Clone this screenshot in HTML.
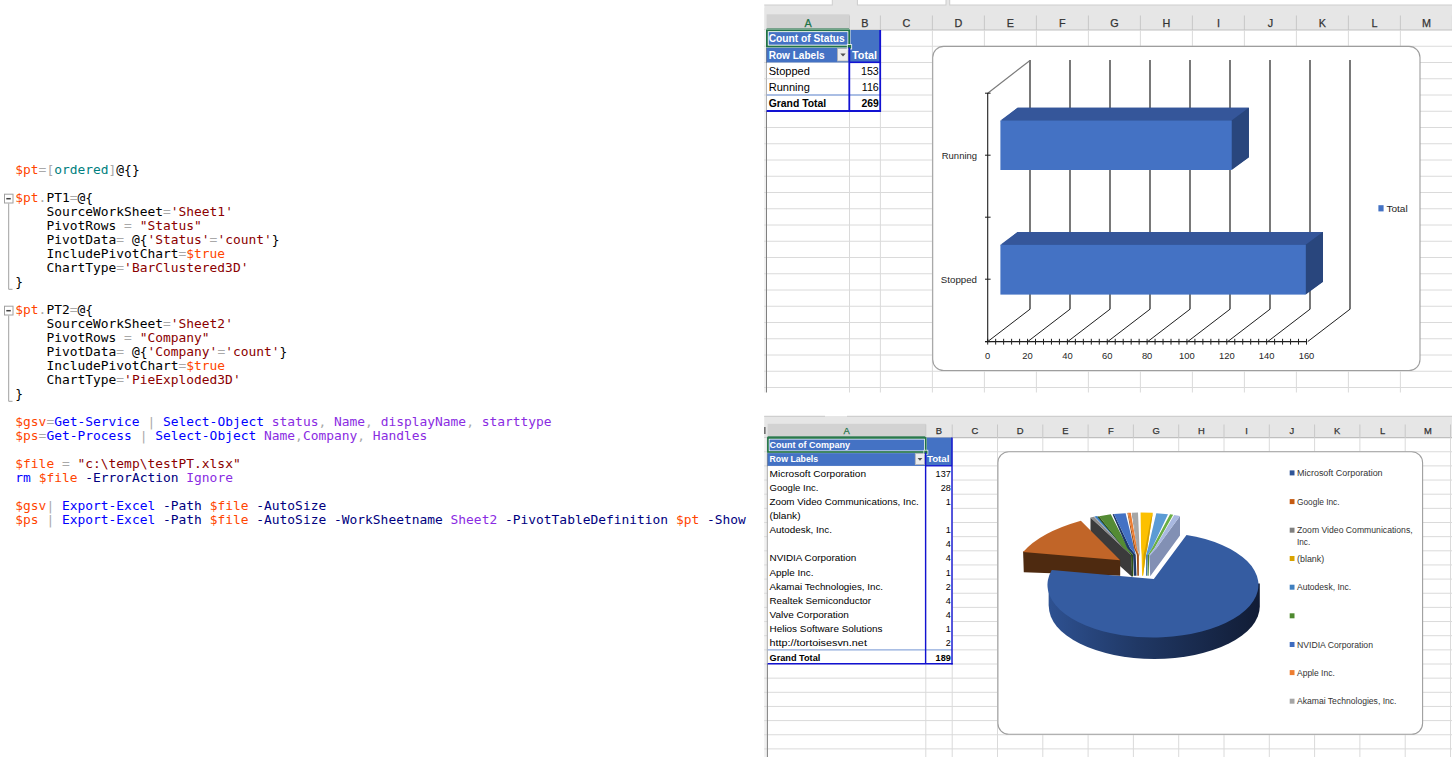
<!DOCTYPE html>
<html lang="en"><head><meta charset="utf-8"><title>PivotTable charts</title>
<style>
html,body{margin:0;padding:0;background:#fff;}
body{width:1452px;height:757px;position:relative;overflow:hidden;font-family:"Liberation Sans",sans-serif;}
pre.code{position:absolute;left:15.3px;top:162.6px;margin:0;font-family:"DejaVu Sans Mono","Liberation Mono",monospace;font-size:12.92px;line-height:14px;color:#000;white-space:pre;letter-spacing:0;}
.v{color:#ff4500}.o{color:#a9a9a9}.t{color:#008080}.s{color:#8b0000}.c{color:#0000ff}.p{color:#000080}.a{color:#8a2be2}.k{color:#000}
svg{position:absolute;left:0;top:0}
svg text{font-family:"Liberation Sans",sans-serif}
</style></head>
<body>
<pre class="code"><span class="v">$pt</span><span class="o">=[</span><span class="t">ordered</span><span class="o">]</span><span class="k">@{}</span>

<span class="v">$pt</span><span class="o">.</span><span class="k">PT1</span><span class="o">=</span><span class="k">@{</span>
    <span class="k">SourceWorkSheet</span><span class="o">=</span><span class="s">'Sheet1'</span>
    <span class="k">PivotRows</span> <span class="o">=</span> <span class="s">"Status"</span>
    <span class="k">PivotData</span><span class="o">=</span> <span class="k">@{</span><span class="s">'Status'</span><span class="o">=</span><span class="s">'count'</span><span class="k">}</span>
    <span class="k">IncludePivotChart</span><span class="o">=</span><span class="v">$true</span>
    <span class="k">ChartType</span><span class="o">=</span><span class="s">'BarClustered3D'</span>
<span class="k">}</span>

<span class="v">$pt</span><span class="o">.</span><span class="k">PT2</span><span class="o">=</span><span class="k">@{</span>
    <span class="k">SourceWorkSheet</span><span class="o">=</span><span class="s">'Sheet2'</span>
    <span class="k">PivotRows</span> <span class="o">=</span> <span class="s">"Company"</span>
    <span class="k">PivotData</span><span class="o">=</span> <span class="k">@{</span><span class="s">'Company'</span><span class="o">=</span><span class="s">'count'</span><span class="k">}</span>
    <span class="k">IncludePivotChart</span><span class="o">=</span><span class="v">$true</span>
    <span class="k">ChartType</span><span class="o">=</span><span class="s">'PieExploded3D'</span>
<span class="k">}</span>

<span class="v">$gsv</span><span class="o">=</span><span class="c">Get-Service</span> <span class="o">|</span> <span class="c">Select-Object</span> <span class="a">status</span><span class="o">,</span> <span class="a">Name</span><span class="o">,</span> <span class="a">displayName</span><span class="o">,</span> <span class="a">starttype</span>
<span class="v">$ps</span><span class="o">=</span><span class="c">Get-Process</span> <span class="o">|</span> <span class="c">Select-Object</span> <span class="a">Name</span><span class="o">,</span><span class="a">Company</span><span class="o">,</span> <span class="a">Handles</span>

<span class="v">$file</span> <span class="o">=</span> <span class="s">"c:\temp\testPT.xlsx"</span>
<span class="c">rm</span> <span class="v">$file</span> <span class="p">-ErrorAction</span> <span class="a">Ignore</span>

<span class="v">$gsv</span><span class="o">|</span> <span class="c">Export-Excel</span> <span class="p">-Path</span> <span class="v">$file</span> <span class="p">-AutoSize</span>
<span class="v">$ps</span> <span class="o">|</span> <span class="c">Export-Excel</span> <span class="p">-Path</span> <span class="v">$file</span> <span class="p">-AutoSize</span> <span class="p">-WorkSheetname</span> <span class="a">Sheet2</span> <span class="p">-PivotTableDefinition</span> <span class="v">$pt</span> <span class="p">-Show</span></pre>
<svg width="1452" height="757" viewBox="0 0 1452 757">
<defs><linearGradient id="bs" x1="0" y1="0" x2="1" y2="0"><stop offset="0" stop-color="#2e5191"/><stop offset="0.42" stop-color="#203865"/><stop offset="1" stop-color="#111c35"/></linearGradient></defs>
<rect x="4.5" y="194.2" width="8.5" height="8.8" fill="#fff" stroke="#a0a0a0" stroke-width="1"/>
<line x1="6.30" y1="198.70" x2="10.80" y2="198.70" stroke="#404040" stroke-width="1.5"/>
<line x1="8.70" y1="203.50" x2="8.70" y2="289.30" stroke="#a0a0a0" stroke-width="1"/>
<line x1="8.70" y1="289.30" x2="12.50" y2="289.30" stroke="#a0a0a0" stroke-width="1"/>
<rect x="4.5" y="306.2" width="8.5" height="8.8" fill="#fff" stroke="#a0a0a0" stroke-width="1"/>
<line x1="6.30" y1="310.70" x2="10.80" y2="310.70" stroke="#404040" stroke-width="1.5"/>
<line x1="8.70" y1="315.50" x2="8.70" y2="401.30" stroke="#a0a0a0" stroke-width="1"/>
<line x1="8.70" y1="401.30" x2="12.50" y2="401.30" stroke="#a0a0a0" stroke-width="1"/>
<rect x="764.20" y="0.00" width="687.80" height="30.00" fill="#e6e6e6"/>
<rect x="762.7" y="-2" width="69.6" height="7" fill="#fff" stroke="#cdcdcd" stroke-width="1"/>
<rect x="857.4" y="-2" width="88.6" height="7" fill="#fff" stroke="#cdcdcd" stroke-width="1"/>
<rect x="949.7" y="-2" width="504.3" height="7" fill="#fff" stroke="#cdcdcd" stroke-width="1"/>
<rect x="761.20" y="0.00" width="3.00" height="8.00" fill="#fff"/>
<rect x="766.60" y="14.30" width="82.90" height="15.70" fill="#d2d2d2"/>
<line x1="766.60" y1="29.30" x2="849.50" y2="29.30" stroke="#217346" stroke-width="1.6"/>
<line x1="849.50" y1="15.50" x2="849.50" y2="30.00" stroke="#c8c8c8" stroke-width="1"/>
<line x1="880.40" y1="15.50" x2="880.40" y2="30.00" stroke="#c8c8c8" stroke-width="1"/>
<line x1="932.40" y1="15.50" x2="932.40" y2="30.00" stroke="#c8c8c8" stroke-width="1"/>
<line x1="984.40" y1="15.50" x2="984.40" y2="30.00" stroke="#c8c8c8" stroke-width="1"/>
<line x1="1036.40" y1="15.50" x2="1036.40" y2="30.00" stroke="#c8c8c8" stroke-width="1"/>
<line x1="1088.40" y1="15.50" x2="1088.40" y2="30.00" stroke="#c8c8c8" stroke-width="1"/>
<line x1="1140.40" y1="15.50" x2="1140.40" y2="30.00" stroke="#c8c8c8" stroke-width="1"/>
<line x1="1192.40" y1="15.50" x2="1192.40" y2="30.00" stroke="#c8c8c8" stroke-width="1"/>
<line x1="1244.40" y1="15.50" x2="1244.40" y2="30.00" stroke="#c8c8c8" stroke-width="1"/>
<line x1="1296.40" y1="15.50" x2="1296.40" y2="30.00" stroke="#c8c8c8" stroke-width="1"/>
<line x1="1348.40" y1="15.50" x2="1348.40" y2="30.00" stroke="#c8c8c8" stroke-width="1"/>
<line x1="1400.40" y1="15.50" x2="1400.40" y2="30.00" stroke="#c8c8c8" stroke-width="1"/>
<line x1="1452.40" y1="15.50" x2="1452.40" y2="30.00" stroke="#c8c8c8" stroke-width="1"/>
<line x1="764.20" y1="30.00" x2="1452.00" y2="30.00" stroke="#bfbfbf" stroke-width="1.2"/>
<text x="808.05" y="26.50" font-size="10.8" fill="#217346" text-anchor="middle" font-weight="normal" stroke="#217346" stroke-width="0.25">A</text>
<text x="864.95" y="26.50" font-size="10.8" fill="#333" text-anchor="middle" font-weight="normal" stroke="#333" stroke-width="0.25">B</text>
<text x="906.40" y="26.50" font-size="10.8" fill="#333" text-anchor="middle" font-weight="normal" stroke="#333" stroke-width="0.25">C</text>
<text x="958.40" y="26.50" font-size="10.8" fill="#333" text-anchor="middle" font-weight="normal" stroke="#333" stroke-width="0.25">D</text>
<text x="1010.40" y="26.50" font-size="10.8" fill="#333" text-anchor="middle" font-weight="normal" stroke="#333" stroke-width="0.25">E</text>
<text x="1062.40" y="26.50" font-size="10.8" fill="#333" text-anchor="middle" font-weight="normal" stroke="#333" stroke-width="0.25">F</text>
<text x="1114.40" y="26.50" font-size="10.8" fill="#333" text-anchor="middle" font-weight="normal" stroke="#333" stroke-width="0.25">G</text>
<text x="1166.40" y="26.50" font-size="10.8" fill="#333" text-anchor="middle" font-weight="normal" stroke="#333" stroke-width="0.25">H</text>
<text x="1218.40" y="26.50" font-size="10.8" fill="#333" text-anchor="middle" font-weight="normal" stroke="#333" stroke-width="0.25">I</text>
<text x="1270.40" y="26.50" font-size="10.8" fill="#333" text-anchor="middle" font-weight="normal" stroke="#333" stroke-width="0.25">J</text>
<text x="1322.40" y="26.50" font-size="10.8" fill="#333" text-anchor="middle" font-weight="normal" stroke="#333" stroke-width="0.25">K</text>
<text x="1374.40" y="26.50" font-size="10.8" fill="#333" text-anchor="middle" font-weight="normal" stroke="#333" stroke-width="0.25">L</text>
<text x="1426.40" y="26.50" font-size="10.8" fill="#333" text-anchor="middle" font-weight="normal" stroke="#333" stroke-width="0.25">M</text>
<rect x="764.20" y="30.00" width="2.40" height="362.70" fill="#f0f0f0"/>
<line x1="764.20" y1="46.25" x2="1452.00" y2="46.25" stroke="#dadada" stroke-width="1"/>
<line x1="764.20" y1="62.50" x2="1452.00" y2="62.50" stroke="#dadada" stroke-width="1"/>
<line x1="764.20" y1="78.75" x2="1452.00" y2="78.75" stroke="#dadada" stroke-width="1"/>
<line x1="764.20" y1="95.00" x2="1452.00" y2="95.00" stroke="#dadada" stroke-width="1"/>
<line x1="764.20" y1="111.25" x2="1452.00" y2="111.25" stroke="#dadada" stroke-width="1"/>
<line x1="764.20" y1="127.50" x2="1452.00" y2="127.50" stroke="#dadada" stroke-width="1"/>
<line x1="764.20" y1="143.75" x2="1452.00" y2="143.75" stroke="#dadada" stroke-width="1"/>
<line x1="764.20" y1="160.00" x2="1452.00" y2="160.00" stroke="#dadada" stroke-width="1"/>
<line x1="764.20" y1="176.25" x2="1452.00" y2="176.25" stroke="#dadada" stroke-width="1"/>
<line x1="764.20" y1="192.50" x2="1452.00" y2="192.50" stroke="#dadada" stroke-width="1"/>
<line x1="764.20" y1="208.75" x2="1452.00" y2="208.75" stroke="#dadada" stroke-width="1"/>
<line x1="764.20" y1="225.00" x2="1452.00" y2="225.00" stroke="#dadada" stroke-width="1"/>
<line x1="764.20" y1="241.25" x2="1452.00" y2="241.25" stroke="#dadada" stroke-width="1"/>
<line x1="764.20" y1="257.50" x2="1452.00" y2="257.50" stroke="#dadada" stroke-width="1"/>
<line x1="764.20" y1="273.75" x2="1452.00" y2="273.75" stroke="#dadada" stroke-width="1"/>
<line x1="764.20" y1="290.00" x2="1452.00" y2="290.00" stroke="#dadada" stroke-width="1"/>
<line x1="764.20" y1="306.25" x2="1452.00" y2="306.25" stroke="#dadada" stroke-width="1"/>
<line x1="764.20" y1="322.50" x2="1452.00" y2="322.50" stroke="#dadada" stroke-width="1"/>
<line x1="764.20" y1="338.75" x2="1452.00" y2="338.75" stroke="#dadada" stroke-width="1"/>
<line x1="764.20" y1="355.00" x2="1452.00" y2="355.00" stroke="#dadada" stroke-width="1"/>
<line x1="764.20" y1="371.25" x2="1452.00" y2="371.25" stroke="#dadada" stroke-width="1"/>
<line x1="764.20" y1="387.50" x2="1452.00" y2="387.50" stroke="#dadada" stroke-width="1"/>
<line x1="849.50" y1="30.00" x2="849.50" y2="392.70" stroke="#dadada" stroke-width="1"/>
<line x1="880.40" y1="30.00" x2="880.40" y2="392.70" stroke="#dadada" stroke-width="1"/>
<line x1="932.40" y1="30.00" x2="932.40" y2="392.70" stroke="#dadada" stroke-width="1"/>
<line x1="984.40" y1="30.00" x2="984.40" y2="392.70" stroke="#dadada" stroke-width="1"/>
<line x1="1036.40" y1="30.00" x2="1036.40" y2="392.70" stroke="#dadada" stroke-width="1"/>
<line x1="1088.40" y1="30.00" x2="1088.40" y2="392.70" stroke="#dadada" stroke-width="1"/>
<line x1="1140.40" y1="30.00" x2="1140.40" y2="392.70" stroke="#dadada" stroke-width="1"/>
<line x1="1192.40" y1="30.00" x2="1192.40" y2="392.70" stroke="#dadada" stroke-width="1"/>
<line x1="1244.40" y1="30.00" x2="1244.40" y2="392.70" stroke="#dadada" stroke-width="1"/>
<line x1="1296.40" y1="30.00" x2="1296.40" y2="392.70" stroke="#dadada" stroke-width="1"/>
<line x1="1348.40" y1="30.00" x2="1348.40" y2="392.70" stroke="#dadada" stroke-width="1"/>
<line x1="1400.40" y1="30.00" x2="1400.40" y2="392.70" stroke="#dadada" stroke-width="1"/>
<line x1="766.50" y1="30.00" x2="766.50" y2="392.70" stroke="#808080" stroke-width="1"/>
<rect x="764.20" y="392.70" width="687.80" height="23.30" fill="#fff"/>
<rect x="766.60" y="30.00" width="113.80" height="32.50" fill="#4472c4"/>
<rect x="766.60" y="62.90" width="113.80" height="48.30" fill="#fff"/>
<line x1="849.50" y1="62.50" x2="849.50" y2="111.00" stroke="#dadada" stroke-width="1"/>
<line x1="766.60" y1="78.75" x2="880.40" y2="78.75" stroke="#dadada" stroke-width="1"/>
<line x1="766.60" y1="95.00" x2="880.40" y2="95.00" stroke="#8ea9db" stroke-width="1.4"/>
<text x="768.70" y="42.40" font-size="10.4" fill="#fff" text-anchor="start" font-weight="bold" textLength="76.1" lengthAdjust="spacingAndGlyphs">Count of Status</text>
<text x="768.70" y="58.70" font-size="10.4" fill="#fff" text-anchor="start" font-weight="bold" textLength="55.9" lengthAdjust="spacingAndGlyphs">Row Labels</text>
<text x="852.00" y="58.70" font-size="10.8" fill="#fff" text-anchor="start" font-weight="bold" textLength="25.0" lengthAdjust="spacingAndGlyphs">Total</text>
<text x="768.70" y="75.00" font-size="11.3" fill="#000" text-anchor="start" font-weight="normal" textLength="41.2" lengthAdjust="spacingAndGlyphs">Stopped</text>
<text x="768.70" y="91.20" font-size="11.3" fill="#000" text-anchor="start" font-weight="normal" textLength="41.2" lengthAdjust="spacingAndGlyphs">Running</text>
<text x="768.70" y="107.40" font-size="10.4" fill="#000" text-anchor="start" font-weight="bold" textLength="57.5" lengthAdjust="spacingAndGlyphs">Grand Total</text>
<text x="878.80" y="75.00" font-size="10.700000000000001" fill="#000" text-anchor="end" font-weight="normal">153</text>
<text x="878.80" y="91.20" font-size="10.700000000000001" fill="#000" text-anchor="end" font-weight="normal">116</text>
<text x="878.80" y="107.40" font-size="10.4" fill="#000" text-anchor="end" font-weight="bold">269</text>
<rect x="837.6" y="48.6" width="10.6" height="12.4" fill="#ececec" stroke="#b5b5b5" stroke-width="0.8"/>
<polygon points="840.3,53.6 845.7,53.6 843.0,56.6" fill="#505050"/>
<rect x="767.2" y="30.6" width="81.8" height="15.6" fill="none" stroke="#fff" stroke-width="3"/>
<rect x="766.9" y="30.3" width="82.3" height="16.2" fill="none" stroke="#217346" stroke-width="1.8"/>
<rect x="847.3" y="44.6" width="4.4" height="4.4" fill="#217346" stroke="#fff" stroke-width="0.8"/>
<line x1="880.20" y1="30.00" x2="880.20" y2="111.80" stroke="#1212d2" stroke-width="1.8"/>
<line x1="766.60" y1="111.00" x2="881.00" y2="111.00" stroke="#1212d2" stroke-width="1.8"/>
<line x1="849.30" y1="47.50" x2="849.30" y2="111.00" stroke="#1212d2" stroke-width="1.8"/>
<line x1="849.30" y1="62.30" x2="880.40" y2="62.30" stroke="#1212d2" stroke-width="1.6"/>
<rect x="932.7" y="46.4" width="487.3" height="324.1" rx="11" ry="11" fill="#fff" stroke="#9e9e9e" stroke-width="1.1"/>
<line x1="1030.00" y1="60.00" x2="1030.00" y2="309.20" stroke="#727272" stroke-width="1.9"/>
<line x1="1030.00" y1="309.20" x2="987.70" y2="341.60" stroke="#1e1e1e" stroke-width="1"/>
<line x1="1070.00" y1="60.00" x2="1070.00" y2="309.20" stroke="#727272" stroke-width="1.9"/>
<line x1="1070.00" y1="309.20" x2="1027.70" y2="341.60" stroke="#1e1e1e" stroke-width="1"/>
<line x1="1110.00" y1="60.00" x2="1110.00" y2="309.20" stroke="#727272" stroke-width="1.9"/>
<line x1="1110.00" y1="309.20" x2="1067.70" y2="341.60" stroke="#1e1e1e" stroke-width="1"/>
<line x1="1150.00" y1="60.00" x2="1150.00" y2="309.20" stroke="#727272" stroke-width="1.9"/>
<line x1="1150.00" y1="309.20" x2="1107.70" y2="341.60" stroke="#1e1e1e" stroke-width="1"/>
<line x1="1190.00" y1="60.00" x2="1190.00" y2="309.20" stroke="#727272" stroke-width="1.9"/>
<line x1="1190.00" y1="309.20" x2="1147.70" y2="341.60" stroke="#1e1e1e" stroke-width="1"/>
<line x1="1230.00" y1="60.00" x2="1230.00" y2="309.20" stroke="#727272" stroke-width="1.9"/>
<line x1="1230.00" y1="309.20" x2="1187.70" y2="341.60" stroke="#1e1e1e" stroke-width="1"/>
<line x1="1270.00" y1="60.00" x2="1270.00" y2="309.20" stroke="#727272" stroke-width="1.9"/>
<line x1="1270.00" y1="309.20" x2="1227.70" y2="341.60" stroke="#1e1e1e" stroke-width="1"/>
<line x1="1310.00" y1="60.00" x2="1310.00" y2="309.20" stroke="#727272" stroke-width="1.9"/>
<line x1="1310.00" y1="309.20" x2="1267.70" y2="341.60" stroke="#1e1e1e" stroke-width="1"/>
<line x1="1350.00" y1="60.00" x2="1350.00" y2="309.20" stroke="#727272" stroke-width="1.9"/>
<line x1="1350.00" y1="309.20" x2="1307.70" y2="341.60" stroke="#1e1e1e" stroke-width="1"/>
<line x1="987.70" y1="93.20" x2="1030.00" y2="60.50" stroke="#7a7a7a" stroke-width="1.2"/>
<line x1="987.70" y1="93.00" x2="987.70" y2="341.60" stroke="#1e1e1e" stroke-width="1.1"/>
<line x1="985.00" y1="341.60" x2="1306.60" y2="341.60" stroke="#1e1e1e" stroke-width="1.1"/>
<line x1="985.00" y1="93.20" x2="990.60" y2="93.20" stroke="#1e1e1e" stroke-width="1"/>
<line x1="985.00" y1="155.20" x2="990.60" y2="155.20" stroke="#1e1e1e" stroke-width="1"/>
<line x1="985.00" y1="217.20" x2="990.60" y2="217.20" stroke="#1e1e1e" stroke-width="1"/>
<line x1="985.00" y1="279.20" x2="990.60" y2="279.20" stroke="#1e1e1e" stroke-width="1"/>
<line x1="985.00" y1="341.60" x2="990.60" y2="341.60" stroke="#1e1e1e" stroke-width="1"/>
<line x1="987.70" y1="338.80" x2="987.70" y2="344.60" stroke="#1e1e1e" stroke-width="1"/>
<line x1="995.67" y1="338.80" x2="995.67" y2="344.60" stroke="#1e1e1e" stroke-width="1"/>
<line x1="1003.64" y1="338.80" x2="1003.64" y2="344.60" stroke="#1e1e1e" stroke-width="1"/>
<line x1="1011.61" y1="338.80" x2="1011.61" y2="344.60" stroke="#1e1e1e" stroke-width="1"/>
<line x1="1019.58" y1="338.80" x2="1019.58" y2="344.60" stroke="#1e1e1e" stroke-width="1"/>
<line x1="1027.55" y1="338.80" x2="1027.55" y2="344.60" stroke="#1e1e1e" stroke-width="1"/>
<line x1="1035.52" y1="338.80" x2="1035.52" y2="344.60" stroke="#1e1e1e" stroke-width="1"/>
<line x1="1043.49" y1="338.80" x2="1043.49" y2="344.60" stroke="#1e1e1e" stroke-width="1"/>
<line x1="1051.46" y1="338.80" x2="1051.46" y2="344.60" stroke="#1e1e1e" stroke-width="1"/>
<line x1="1059.43" y1="338.80" x2="1059.43" y2="344.60" stroke="#1e1e1e" stroke-width="1"/>
<line x1="1067.40" y1="338.80" x2="1067.40" y2="344.60" stroke="#1e1e1e" stroke-width="1"/>
<line x1="1075.37" y1="338.80" x2="1075.37" y2="344.60" stroke="#1e1e1e" stroke-width="1"/>
<line x1="1083.34" y1="338.80" x2="1083.34" y2="344.60" stroke="#1e1e1e" stroke-width="1"/>
<line x1="1091.31" y1="338.80" x2="1091.31" y2="344.60" stroke="#1e1e1e" stroke-width="1"/>
<line x1="1099.28" y1="338.80" x2="1099.28" y2="344.60" stroke="#1e1e1e" stroke-width="1"/>
<line x1="1107.25" y1="338.80" x2="1107.25" y2="344.60" stroke="#1e1e1e" stroke-width="1"/>
<line x1="1115.22" y1="338.80" x2="1115.22" y2="344.60" stroke="#1e1e1e" stroke-width="1"/>
<line x1="1123.19" y1="338.80" x2="1123.19" y2="344.60" stroke="#1e1e1e" stroke-width="1"/>
<line x1="1131.16" y1="338.80" x2="1131.16" y2="344.60" stroke="#1e1e1e" stroke-width="1"/>
<line x1="1139.13" y1="338.80" x2="1139.13" y2="344.60" stroke="#1e1e1e" stroke-width="1"/>
<line x1="1147.10" y1="338.80" x2="1147.10" y2="344.60" stroke="#1e1e1e" stroke-width="1"/>
<line x1="1155.07" y1="338.80" x2="1155.07" y2="344.60" stroke="#1e1e1e" stroke-width="1"/>
<line x1="1163.04" y1="338.80" x2="1163.04" y2="344.60" stroke="#1e1e1e" stroke-width="1"/>
<line x1="1171.01" y1="338.80" x2="1171.01" y2="344.60" stroke="#1e1e1e" stroke-width="1"/>
<line x1="1178.98" y1="338.80" x2="1178.98" y2="344.60" stroke="#1e1e1e" stroke-width="1"/>
<line x1="1186.95" y1="338.80" x2="1186.95" y2="344.60" stroke="#1e1e1e" stroke-width="1"/>
<line x1="1194.92" y1="338.80" x2="1194.92" y2="344.60" stroke="#1e1e1e" stroke-width="1"/>
<line x1="1202.89" y1="338.80" x2="1202.89" y2="344.60" stroke="#1e1e1e" stroke-width="1"/>
<line x1="1210.86" y1="338.80" x2="1210.86" y2="344.60" stroke="#1e1e1e" stroke-width="1"/>
<line x1="1218.83" y1="338.80" x2="1218.83" y2="344.60" stroke="#1e1e1e" stroke-width="1"/>
<line x1="1226.80" y1="338.80" x2="1226.80" y2="344.60" stroke="#1e1e1e" stroke-width="1"/>
<line x1="1234.77" y1="338.80" x2="1234.77" y2="344.60" stroke="#1e1e1e" stroke-width="1"/>
<line x1="1242.74" y1="338.80" x2="1242.74" y2="344.60" stroke="#1e1e1e" stroke-width="1"/>
<line x1="1250.71" y1="338.80" x2="1250.71" y2="344.60" stroke="#1e1e1e" stroke-width="1"/>
<line x1="1258.68" y1="338.80" x2="1258.68" y2="344.60" stroke="#1e1e1e" stroke-width="1"/>
<line x1="1266.65" y1="338.80" x2="1266.65" y2="344.60" stroke="#1e1e1e" stroke-width="1"/>
<line x1="1274.62" y1="338.80" x2="1274.62" y2="344.60" stroke="#1e1e1e" stroke-width="1"/>
<line x1="1282.59" y1="338.80" x2="1282.59" y2="344.60" stroke="#1e1e1e" stroke-width="1"/>
<line x1="1290.56" y1="338.80" x2="1290.56" y2="344.60" stroke="#1e1e1e" stroke-width="1"/>
<line x1="1298.53" y1="338.80" x2="1298.53" y2="344.60" stroke="#1e1e1e" stroke-width="1"/>
<line x1="1306.50" y1="338.80" x2="1306.50" y2="344.60" stroke="#1e1e1e" stroke-width="1"/>
<polygon points="1000.4,121.5 1017.6,107.7 1248.9,107.7 1248.9,157.2 1230.7,170.0 1230.7,121.5" fill="#2f4e8a"/>
<polygon points="1000.4,120.5 1017.6,107.7 1248.9,107.7 1231.7,120.5" fill="#35569a"/>
<polygon points="1231.7,120.5 1248.9,107.7 1248.9,157.2 1231.7,170.0" fill="#29467d"/>
<rect x="1000.40" y="120.50" width="231.30" height="49.50" fill="#4472c4"/>
<polygon points="1000.4,245.8 1017.6,232.0 1323.0,232.0 1323.0,281.8 1304.8,294.6 1304.8,245.8" fill="#2f4e8a"/>
<polygon points="1000.4,244.8 1017.6,232.0 1323.0,232.0 1305.8,244.8" fill="#35569a"/>
<polygon points="1305.8,244.8 1323.0,232.0 1323.0,281.8 1305.8,294.6" fill="#29467d"/>
<rect x="1000.40" y="244.80" width="305.40" height="49.80" fill="#4472c4"/>
<text x="941.80" y="158.60" font-size="9.6" fill="#262626" text-anchor="start" font-weight="normal" textLength="35.2" lengthAdjust="spacingAndGlyphs">Running</text>
<text x="940.80" y="282.70" font-size="9.6" fill="#262626" text-anchor="start" font-weight="normal" textLength="36.2" lengthAdjust="spacingAndGlyphs">Stopped</text>
<text x="987.70" y="358.80" font-size="9.4" fill="#262626" text-anchor="middle" font-weight="normal">0</text>
<text x="1027.55" y="358.80" font-size="9.4" fill="#262626" text-anchor="middle" font-weight="normal">20</text>
<text x="1067.40" y="358.80" font-size="9.4" fill="#262626" text-anchor="middle" font-weight="normal">40</text>
<text x="1107.25" y="358.80" font-size="9.4" fill="#262626" text-anchor="middle" font-weight="normal">60</text>
<text x="1147.10" y="358.80" font-size="9.4" fill="#262626" text-anchor="middle" font-weight="normal">80</text>
<text x="1186.95" y="358.80" font-size="9.4" fill="#262626" text-anchor="middle" font-weight="normal">100</text>
<text x="1226.80" y="358.80" font-size="9.4" fill="#262626" text-anchor="middle" font-weight="normal">120</text>
<text x="1266.65" y="358.80" font-size="9.4" fill="#262626" text-anchor="middle" font-weight="normal">140</text>
<text x="1306.50" y="358.80" font-size="9.4" fill="#262626" text-anchor="middle" font-weight="normal">160</text>
<rect x="1378.40" y="205.20" width="5.20" height="6.20" fill="#4472c4"/>
<text x="1386.40" y="211.60" font-size="9.4" fill="#262626" text-anchor="start" font-weight="normal" textLength="21.3" lengthAdjust="spacingAndGlyphs">Total</text>
<rect x="764.20" y="416.00" width="687.80" height="21.60" fill="#e6e6e6"/>
<line x1="764.20" y1="416.30" x2="825.00" y2="416.30" stroke="#cfcfcf" stroke-width="1.2"/>
<line x1="847.00" y1="416.30" x2="1452.00" y2="416.30" stroke="#cfcfcf" stroke-width="1.2"/>
<rect x="767.60" y="423.80" width="158.20" height="13.80" fill="#d2d2d2"/>
<line x1="767.60" y1="437.00" x2="925.80" y2="437.00" stroke="#217346" stroke-width="1.5"/>
<line x1="925.80" y1="424.50" x2="925.80" y2="437.60" stroke="#c8c8c8" stroke-width="1"/>
<line x1="952.20" y1="424.50" x2="952.20" y2="437.60" stroke="#c8c8c8" stroke-width="1"/>
<line x1="997.50" y1="424.50" x2="997.50" y2="437.60" stroke="#c8c8c8" stroke-width="1"/>
<line x1="1042.80" y1="424.50" x2="1042.80" y2="437.60" stroke="#c8c8c8" stroke-width="1"/>
<line x1="1088.10" y1="424.50" x2="1088.10" y2="437.60" stroke="#c8c8c8" stroke-width="1"/>
<line x1="1133.40" y1="424.50" x2="1133.40" y2="437.60" stroke="#c8c8c8" stroke-width="1"/>
<line x1="1178.70" y1="424.50" x2="1178.70" y2="437.60" stroke="#c8c8c8" stroke-width="1"/>
<line x1="1224.00" y1="424.50" x2="1224.00" y2="437.60" stroke="#c8c8c8" stroke-width="1"/>
<line x1="1269.30" y1="424.50" x2="1269.30" y2="437.60" stroke="#c8c8c8" stroke-width="1"/>
<line x1="1314.60" y1="424.50" x2="1314.60" y2="437.60" stroke="#c8c8c8" stroke-width="1"/>
<line x1="1359.90" y1="424.50" x2="1359.90" y2="437.60" stroke="#c8c8c8" stroke-width="1"/>
<line x1="1405.20" y1="424.50" x2="1405.20" y2="437.60" stroke="#c8c8c8" stroke-width="1"/>
<line x1="1450.50" y1="424.50" x2="1450.50" y2="437.60" stroke="#c8c8c8" stroke-width="1"/>
<line x1="1495.80" y1="424.50" x2="1495.80" y2="437.60" stroke="#c8c8c8" stroke-width="1"/>
<line x1="764.20" y1="437.60" x2="1452.00" y2="437.60" stroke="#bfbfbf" stroke-width="1.2"/>
<text x="846.70" y="433.90" font-size="9.4" fill="#217346" text-anchor="middle" font-weight="normal" stroke="#217346" stroke-width="0.25">A</text>
<text x="939.00" y="433.90" font-size="9.4" fill="#333" text-anchor="middle" font-weight="normal" stroke="#333" stroke-width="0.25">B</text>
<text x="974.85" y="433.90" font-size="9.4" fill="#333" text-anchor="middle" font-weight="normal" stroke="#333" stroke-width="0.25">C</text>
<text x="1020.15" y="433.90" font-size="9.4" fill="#333" text-anchor="middle" font-weight="normal" stroke="#333" stroke-width="0.25">D</text>
<text x="1065.45" y="433.90" font-size="9.4" fill="#333" text-anchor="middle" font-weight="normal" stroke="#333" stroke-width="0.25">E</text>
<text x="1110.75" y="433.90" font-size="9.4" fill="#333" text-anchor="middle" font-weight="normal" stroke="#333" stroke-width="0.25">F</text>
<text x="1156.05" y="433.90" font-size="9.4" fill="#333" text-anchor="middle" font-weight="normal" stroke="#333" stroke-width="0.25">G</text>
<text x="1201.35" y="433.90" font-size="9.4" fill="#333" text-anchor="middle" font-weight="normal" stroke="#333" stroke-width="0.25">H</text>
<text x="1246.65" y="433.90" font-size="9.4" fill="#333" text-anchor="middle" font-weight="normal" stroke="#333" stroke-width="0.25">I</text>
<text x="1291.95" y="433.90" font-size="9.4" fill="#333" text-anchor="middle" font-weight="normal" stroke="#333" stroke-width="0.25">J</text>
<text x="1337.25" y="433.90" font-size="9.4" fill="#333" text-anchor="middle" font-weight="normal" stroke="#333" stroke-width="0.25">K</text>
<text x="1382.55" y="433.90" font-size="9.4" fill="#333" text-anchor="middle" font-weight="normal" stroke="#333" stroke-width="0.25">L</text>
<text x="1427.85" y="433.90" font-size="9.4" fill="#333" text-anchor="middle" font-weight="normal" stroke="#333" stroke-width="0.25">M</text>
<rect x="764.20" y="437.60" width="3.40" height="320.00" fill="#f0f0f0"/>
<line x1="764.20" y1="451.75" x2="1452.00" y2="451.75" stroke="#dadada" stroke-width="1"/>
<line x1="764.20" y1="465.90" x2="1452.00" y2="465.90" stroke="#dadada" stroke-width="1"/>
<line x1="764.20" y1="480.05" x2="1452.00" y2="480.05" stroke="#dadada" stroke-width="1"/>
<line x1="764.20" y1="494.20" x2="1452.00" y2="494.20" stroke="#dadada" stroke-width="1"/>
<line x1="764.20" y1="508.35" x2="1452.00" y2="508.35" stroke="#dadada" stroke-width="1"/>
<line x1="764.20" y1="522.50" x2="1452.00" y2="522.50" stroke="#dadada" stroke-width="1"/>
<line x1="764.20" y1="536.65" x2="1452.00" y2="536.65" stroke="#dadada" stroke-width="1"/>
<line x1="764.20" y1="550.80" x2="1452.00" y2="550.80" stroke="#dadada" stroke-width="1"/>
<line x1="764.20" y1="564.95" x2="1452.00" y2="564.95" stroke="#dadada" stroke-width="1"/>
<line x1="764.20" y1="579.10" x2="1452.00" y2="579.10" stroke="#dadada" stroke-width="1"/>
<line x1="764.20" y1="593.25" x2="1452.00" y2="593.25" stroke="#dadada" stroke-width="1"/>
<line x1="764.20" y1="607.40" x2="1452.00" y2="607.40" stroke="#dadada" stroke-width="1"/>
<line x1="764.20" y1="621.55" x2="1452.00" y2="621.55" stroke="#dadada" stroke-width="1"/>
<line x1="764.20" y1="635.70" x2="1452.00" y2="635.70" stroke="#dadada" stroke-width="1"/>
<line x1="764.20" y1="649.85" x2="1452.00" y2="649.85" stroke="#dadada" stroke-width="1"/>
<line x1="764.20" y1="664.00" x2="1452.00" y2="664.00" stroke="#dadada" stroke-width="1"/>
<line x1="764.20" y1="678.15" x2="1452.00" y2="678.15" stroke="#dadada" stroke-width="1"/>
<line x1="764.20" y1="692.30" x2="1452.00" y2="692.30" stroke="#dadada" stroke-width="1"/>
<line x1="764.20" y1="706.45" x2="1452.00" y2="706.45" stroke="#dadada" stroke-width="1"/>
<line x1="764.20" y1="720.60" x2="1452.00" y2="720.60" stroke="#dadada" stroke-width="1"/>
<line x1="764.20" y1="734.75" x2="1452.00" y2="734.75" stroke="#dadada" stroke-width="1"/>
<line x1="764.20" y1="748.90" x2="1452.00" y2="748.90" stroke="#dadada" stroke-width="1"/>
<line x1="764.20" y1="763.05" x2="1452.00" y2="763.05" stroke="#dadada" stroke-width="1"/>
<line x1="925.80" y1="437.60" x2="925.80" y2="757.00" stroke="#dadada" stroke-width="1"/>
<line x1="952.20" y1="437.60" x2="952.20" y2="757.00" stroke="#dadada" stroke-width="1"/>
<line x1="997.50" y1="437.60" x2="997.50" y2="757.00" stroke="#dadada" stroke-width="1"/>
<line x1="1042.80" y1="437.60" x2="1042.80" y2="757.00" stroke="#dadada" stroke-width="1"/>
<line x1="1088.10" y1="437.60" x2="1088.10" y2="757.00" stroke="#dadada" stroke-width="1"/>
<line x1="1133.40" y1="437.60" x2="1133.40" y2="757.00" stroke="#dadada" stroke-width="1"/>
<line x1="1178.70" y1="437.60" x2="1178.70" y2="757.00" stroke="#dadada" stroke-width="1"/>
<line x1="1224.00" y1="437.60" x2="1224.00" y2="757.00" stroke="#dadada" stroke-width="1"/>
<line x1="1269.30" y1="437.60" x2="1269.30" y2="757.00" stroke="#dadada" stroke-width="1"/>
<line x1="1314.60" y1="437.60" x2="1314.60" y2="757.00" stroke="#dadada" stroke-width="1"/>
<line x1="1359.90" y1="437.60" x2="1359.90" y2="757.00" stroke="#dadada" stroke-width="1"/>
<line x1="1405.20" y1="437.60" x2="1405.20" y2="757.00" stroke="#dadada" stroke-width="1"/>
<line x1="1450.50" y1="437.60" x2="1450.50" y2="757.00" stroke="#dadada" stroke-width="1"/>
<line x1="767.40" y1="437.60" x2="767.40" y2="757.00" stroke="#808080" stroke-width="1"/>
<rect x="764.20" y="427.00" width="1.30" height="7.00" fill="#555"/>
<rect x="767.60" y="437.60" width="184.60" height="28.30" fill="#4472c4"/>
<rect x="767.60" y="466.20" width="184.60" height="197.80" fill="#fff"/>
<line x1="925.80" y1="466.00" x2="925.80" y2="664.00" stroke="#dadada" stroke-width="1"/>
<line x1="767.60" y1="649.85" x2="952.20" y2="649.85" stroke="#8ea9db" stroke-width="1.3"/>
<text x="769.50" y="448.25" font-size="9.1" fill="#fff" text-anchor="start" font-weight="bold" textLength="80.6" lengthAdjust="spacingAndGlyphs">Count of Company</text>
<text x="769.50" y="462.40" font-size="9.1" fill="#fff" text-anchor="start" font-weight="bold" textLength="48.6" lengthAdjust="spacingAndGlyphs">Row Labels</text>
<text x="926.90" y="462.40" font-size="9.3" fill="#fff" text-anchor="start" font-weight="bold" textLength="22.6" lengthAdjust="spacingAndGlyphs">Total</text>
<text x="769.50" y="476.55" font-size="9.9" fill="#000" text-anchor="start" font-weight="normal" textLength="96.5" lengthAdjust="spacingAndGlyphs">Microsoft Corporation</text>
<text x="950.80" y="476.55" font-size="9.1" fill="#000" text-anchor="end" font-weight="normal">137</text>
<text x="769.50" y="490.70" font-size="9.9" fill="#000" text-anchor="start" font-weight="normal" textLength="48.9" lengthAdjust="spacingAndGlyphs">Google Inc.</text>
<text x="950.80" y="490.70" font-size="9.1" fill="#000" text-anchor="end" font-weight="normal">28</text>
<text x="769.50" y="504.85" font-size="9.9" fill="#000" text-anchor="start" font-weight="normal" textLength="149.3" lengthAdjust="spacingAndGlyphs">Zoom Video Communications, Inc.</text>
<text x="950.80" y="504.85" font-size="9.1" fill="#000" text-anchor="end" font-weight="normal">1</text>
<text x="769.50" y="519.00" font-size="9.9" fill="#000" text-anchor="start" font-weight="normal" textLength="31.1" lengthAdjust="spacingAndGlyphs">(blank)</text>
<text x="769.50" y="533.15" font-size="9.9" fill="#000" text-anchor="start" font-weight="normal" textLength="62.5" lengthAdjust="spacingAndGlyphs">Autodesk, Inc.</text>
<text x="950.80" y="533.15" font-size="9.1" fill="#000" text-anchor="end" font-weight="normal">1</text>
<text x="950.80" y="547.30" font-size="9.1" fill="#000" text-anchor="end" font-weight="normal">4</text>
<text x="769.50" y="561.45" font-size="9.9" fill="#000" text-anchor="start" font-weight="normal" textLength="86.7" lengthAdjust="spacingAndGlyphs">NVIDIA Corporation</text>
<text x="950.80" y="561.45" font-size="9.1" fill="#000" text-anchor="end" font-weight="normal">4</text>
<text x="769.50" y="575.60" font-size="9.9" fill="#000" text-anchor="start" font-weight="normal" textLength="43.9" lengthAdjust="spacingAndGlyphs">Apple Inc.</text>
<text x="950.80" y="575.60" font-size="9.1" fill="#000" text-anchor="end" font-weight="normal">1</text>
<text x="769.50" y="589.75" font-size="9.9" fill="#000" text-anchor="start" font-weight="normal" textLength="113.5" lengthAdjust="spacingAndGlyphs">Akamai Technologies, Inc.</text>
<text x="950.80" y="589.75" font-size="9.1" fill="#000" text-anchor="end" font-weight="normal">2</text>
<text x="769.50" y="603.90" font-size="9.9" fill="#000" text-anchor="start" font-weight="normal" textLength="101.6" lengthAdjust="spacingAndGlyphs">Realtek Semiconductor</text>
<text x="950.80" y="603.90" font-size="9.1" fill="#000" text-anchor="end" font-weight="normal">4</text>
<text x="769.50" y="618.05" font-size="9.9" fill="#000" text-anchor="start" font-weight="normal" textLength="79.4" lengthAdjust="spacingAndGlyphs">Valve Corporation</text>
<text x="950.80" y="618.05" font-size="9.1" fill="#000" text-anchor="end" font-weight="normal">4</text>
<text x="769.50" y="632.20" font-size="9.9" fill="#000" text-anchor="start" font-weight="normal" textLength="113.0" lengthAdjust="spacingAndGlyphs">Helios Software Solutions</text>
<text x="950.80" y="632.20" font-size="9.1" fill="#000" text-anchor="end" font-weight="normal">1</text>
<text x="769.50" y="646.35" font-size="9.9" fill="#000" text-anchor="start" font-weight="normal" textLength="97.4" lengthAdjust="spacingAndGlyphs">http://tortoisesvn.net</text>
<text x="950.80" y="646.35" font-size="9.1" fill="#000" text-anchor="end" font-weight="normal">2</text>
<text x="769.50" y="660.50" font-size="9.1" fill="#000" text-anchor="start" font-weight="bold" textLength="50.8" lengthAdjust="spacingAndGlyphs">Grand Total</text>
<text x="950.80" y="660.50" font-size="9.1" fill="#000" text-anchor="end" font-weight="bold">189</text>
<rect x="915.3" y="453.6" width="9.4" height="11" fill="#ececec" stroke="#b5b5b5" stroke-width="0.8"/>
<polygon points="917.6,458.0 922.4,458.0 920.0,460.7" fill="#505050"/>
<rect x="768.2" y="438.2" width="157.2" height="13.6" fill="none" stroke="#fff" stroke-width="2.6"/>
<rect x="767.9" y="437.9" width="157.8" height="14.1" fill="none" stroke="#217346" stroke-width="1.7"/>
<rect x="923.9" y="450.2" width="4" height="4" fill="#217346" stroke="#fff" stroke-width="0.7"/>
<line x1="952.00" y1="437.60" x2="952.00" y2="664.60" stroke="#1212d2" stroke-width="1.4"/>
<line x1="767.60" y1="663.80" x2="952.80" y2="663.80" stroke="#1212d2" stroke-width="1.4"/>
<line x1="925.60" y1="452.50" x2="925.60" y2="664.00" stroke="#1212d2" stroke-width="1.4"/>
<line x1="925.60" y1="465.80" x2="952.00" y2="465.80" stroke="#1212d2" stroke-width="1.3"/>
<rect x="997.9" y="451.7" width="424.7" height="282.6" rx="11" ry="11" fill="#fff" stroke="#9e9e9e" stroke-width="1.1"/>
<polygon points="1090.5,517.6 1131.2,554.9 1132.2,577.1 1090.5,539.4" fill="#3b3b3b"/>
<polygon points="1090.5,517.6 1094.0,516.8 1131.3,554.6 1130.8,555.0" fill="#8c8c8c"/>
<polygon points="1094.3,516.6 1097.1,516.1 1131.8,554.4 1131.3,554.7" fill="#3f7fc4"/>
<polygon points="1097.3,516.7 1099.1,516.3 1124.2,547.9 1133.1,554.7 1133.3,575.8 1132.0,576.8 1131.0,554.7 1122.3,546.5" fill="#2f5218"/>
<polygon points="1099.1,516.3 1110.8,514.3 1128.0,547.9 1133.1,555.0 1123.6,547.9" fill="#548b34"/>
<polygon points="1112.6,514.6 1113.9,514.1 1130.1,547.9 1135.7,554.7 1136.5,575.8 1134.0,575.8 1133.0,554.7 1127.2,547.9" fill="#1e3868"/>
<polygon points="1113.9,514.1 1125.6,513.2 1134.2,547.9 1135.7,554.7 1130.1,547.9" fill="#4472c4"/>
<polygon points="1127.4,513.1 1128.0,512.8 1135.5,547.9 1138.9,554.7 1138.9,575.8 1137.3,575.8 1136.8,554.7 1134.0,547.9" fill="#a0541b"/>
<polygon points="1128.0,512.8 1130.8,512.7 1137.0,547.9 1138.9,556.0 1135.5,547.9" fill="#ee7d31"/>
<polygon points="1131.8,512.9 1132.4,512.7 1137.5,547.9 1139.5,556.0 1137.0,547.9" fill="#6e6e6e"/>
<polygon points="1132.2,512.7 1138.0,512.5 1139.5,547.9 1139.9,556.5 1137.4,547.9" fill="#a6a6a6"/>
<polygon points="1140.6,512.5 1152.8,512.7 1147.3,547.9 1145.8,554.7 1143.1,575.8 1142.1,575.8 1141.6,554.7 1141.1,547.9" fill="#fcc000"/>
<polygon points="1152.8,512.7 1147.3,547.9 1145.8,554.7 1143.1,575.8 1143.5,554.7 1145.3,547.9 1150.6,520.0" fill="#d2a000"/>
<polygon points="1146.1,554.7 1147.9,554.7 1147.1,575.8 1146.0,575.8" fill="#3f76ae"/>
<polygon points="1156.3,513.2 1168.0,514.2 1152.1,547.9 1147.9,554.9 1146.1,554.9 1148.0,547.9" fill="#5c9bd5"/>
<polygon points="1147.9,554.7 1149.3,554.7 1148.6,575.8 1147.5,575.8" fill="#4e8230"/>
<polygon points="1170.1,514.3 1173.2,514.7 1154.6,547.9 1149.3,554.9 1147.9,554.9 1152.1,547.9" fill="#6aae45"/>
<polygon points="1180.0,515.9 1180.0,535.5 1150.2,576.2 1149.4,555.2 1156.6,547.9" fill="#8290b4"/>
<polygon points="1174.2,514.9 1180.0,515.9 1156.6,547.9 1150.3,555.5 1149.3,554.9 1154.6,547.9" fill="#a9b8e0"/>
<polygon points="1023.1,551.4 1023.8,572.3 1120.2,575.8 1120.2,559.3 1080.0,545.0" fill="#4e2a10"/>
<path d="M1120.2,560.3 L1080.9,520.7 Q1039.6,532.4 1023.1,552.1 Z" fill="#c16528"/>
<path d="M1048.8,583.6 L1259.8,583.6 L1259.8,606.3 A105.5,52.7 0 0 1 1048.8,606.3 Z" fill="url(#bs)"/>
<polygon points="1051.8,569.9 1048.8,583.6 1048.8,606.3 1051.8,592.6" fill="#2f5496"/>
<path d="M1153.8,579 L1186.5,534.9 A105.5,52.7 0 1 1 1051.8,569.9 Z" fill="#355ca1"/>
<rect x="1289.70" y="470.40" width="4.80" height="5.00" fill="#2f5597"/>
<text x="1297.00" y="476.10" font-size="8.9" fill="#333" text-anchor="start" font-weight="normal" textLength="85.6" lengthAdjust="spacingAndGlyphs">Microsoft Corporation</text>
<rect x="1289.70" y="499.10" width="4.80" height="5.00" fill="#c55a11"/>
<text x="1297.00" y="504.80" font-size="8.9" fill="#333" text-anchor="start" font-weight="normal" textLength="42.6" lengthAdjust="spacingAndGlyphs">Google Inc.</text>
<rect x="1289.70" y="527.70" width="4.80" height="5.00" fill="#7f7f7f"/>
<text x="1297.00" y="533.40" font-size="8.9" fill="#333" text-anchor="start" font-weight="normal" textLength="115.6" lengthAdjust="spacingAndGlyphs">Zoom Video Communications,</text>
<rect x="1289.70" y="556.00" width="4.80" height="5.00" fill="#d9a300"/>
<text x="1297.00" y="561.70" font-size="8.9" fill="#333" text-anchor="start" font-weight="normal" textLength="27.2" lengthAdjust="spacingAndGlyphs">(blank)</text>
<rect x="1289.70" y="584.70" width="4.80" height="5.00" fill="#3f7fbf"/>
<text x="1297.00" y="590.40" font-size="8.9" fill="#333" text-anchor="start" font-weight="normal" textLength="54.2" lengthAdjust="spacingAndGlyphs">Autodesk, Inc.</text>
<rect x="1289.70" y="613.30" width="4.80" height="5.00" fill="#4f8a2f"/>
<rect x="1289.70" y="642.00" width="4.80" height="5.00" fill="#3e6cc0"/>
<text x="1297.00" y="647.70" font-size="8.9" fill="#333" text-anchor="start" font-weight="normal" textLength="76.0" lengthAdjust="spacingAndGlyphs">NVIDIA Corporation</text>
<rect x="1289.70" y="670.10" width="4.80" height="5.00" fill="#ed7d31"/>
<text x="1297.00" y="675.80" font-size="8.9" fill="#333" text-anchor="start" font-weight="normal" textLength="37.8" lengthAdjust="spacingAndGlyphs">Apple Inc.</text>
<rect x="1289.70" y="698.70" width="4.80" height="5.00" fill="#a5a5a5"/>
<text x="1297.00" y="704.40" font-size="8.9" fill="#333" text-anchor="start" font-weight="normal" textLength="99.5" lengthAdjust="spacingAndGlyphs">Akamai Technologies, Inc.</text>
<text x="1297.00" y="544.90" font-size="8.9" fill="#333" text-anchor="start" font-weight="normal" textLength="13.2" lengthAdjust="spacingAndGlyphs">Inc.</text>
</svg>
</body></html>
